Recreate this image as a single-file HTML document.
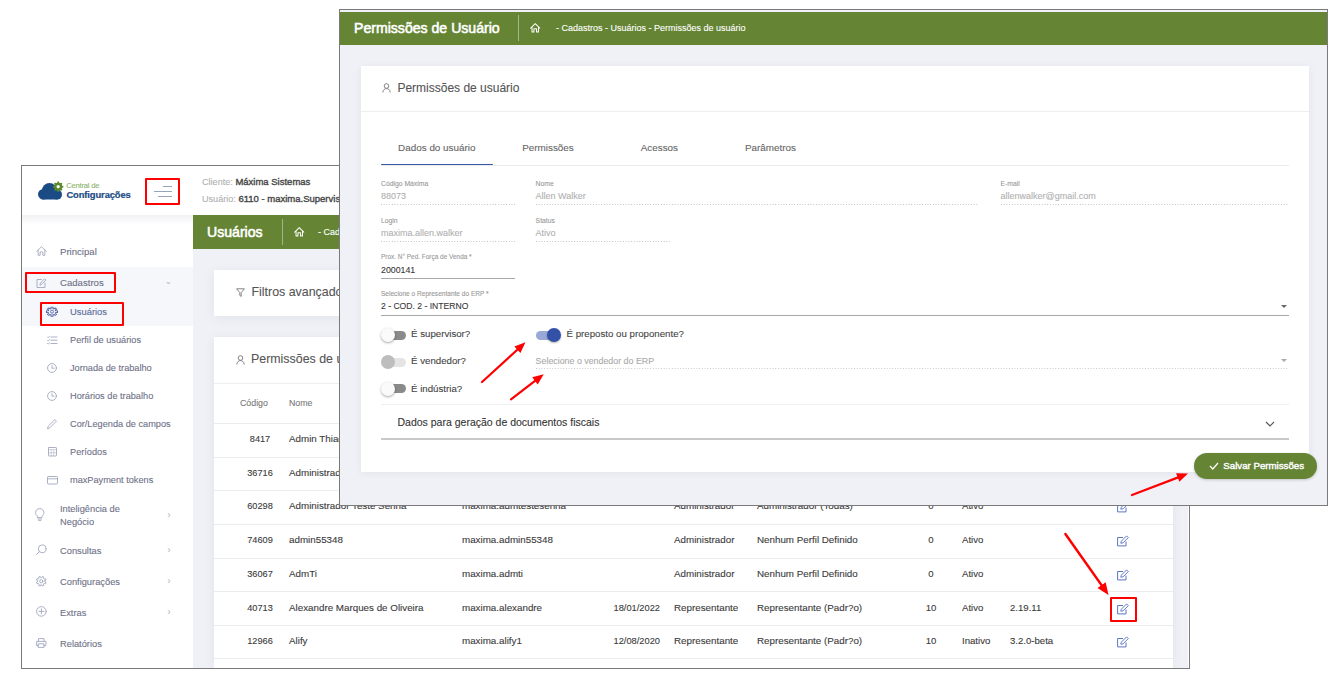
<!DOCTYPE html>
<html><head><meta charset="utf-8"><style>
html,body{margin:0;padding:0}
body{width:1336px;height:676px;position:relative;overflow:hidden;background:#fff;font-family:'Liberation Sans', sans-serif}
div{-webkit-text-stroke:0.1px currentColor}
</style></head><body>
<div style="position:absolute;left:21px;top:165px;width:1168px;height:503px;border:1px solid #7a7a7a;background:#fff;box-sizing:border-box;width:1169px;height:504px"></div>
<div style="position:absolute;left:193px;top:215px;width:995px;height:453px;background:#f0f1f6"></div>
<div style="position:absolute;left:22px;top:215px;width:171px;height:10px;background:linear-gradient(#f1f1f4,#fff)"></div>
<svg style="position:absolute;left:36px;top:180px" width="30" height="22" viewBox="0 0 30 22">
<g fill="#1b4b84"><circle cx="7.3" cy="14.3" r="5.3"/><circle cx="13.5" cy="10.6" r="7.6"/><circle cx="21" cy="14.6" r="5"/><rect x="6" y="12" width="16" height="7.6" rx="1"/></g>
<g transform="translate(22.2,6.7)"><circle r="3.9" fill="#5a8a2c"/><rect x="-0.95" y="-5.1" width="1.9" height="2" rx="0.3" transform="rotate(0)" fill="#5a8a2c"/><rect x="-0.95" y="-5.1" width="1.9" height="2" rx="0.3" transform="rotate(45)" fill="#5a8a2c"/><rect x="-0.95" y="-5.1" width="1.9" height="2" rx="0.3" transform="rotate(90)" fill="#5a8a2c"/><rect x="-0.95" y="-5.1" width="1.9" height="2" rx="0.3" transform="rotate(135)" fill="#5a8a2c"/><rect x="-0.95" y="-5.1" width="1.9" height="2" rx="0.3" transform="rotate(180)" fill="#5a8a2c"/><rect x="-0.95" y="-5.1" width="1.9" height="2" rx="0.3" transform="rotate(225)" fill="#5a8a2c"/><rect x="-0.95" y="-5.1" width="1.9" height="2" rx="0.3" transform="rotate(270)" fill="#5a8a2c"/><rect x="-0.95" y="-5.1" width="1.9" height="2" rx="0.3" transform="rotate(315)" fill="#5a8a2c"/><circle r="1.6" fill="#fff"/></g>
</svg>
<div style="position:absolute;left:66.2px;top:176.40px;line-height:20px;font-size:7.6px;color:#8db36a;font-weight:normal;white-space:nowrap;letter-spacing:-0.2px">Central de</div>
<div style="position:absolute;left:66.4px;top:185.20px;line-height:20px;font-size:9.4px;color:#1b4b84;font-weight:bold;white-space:nowrap;-webkit-text-stroke:0;letter-spacing:-0.1px;-webkit-text-stroke:0.2px #1b4b84">Configurações</div>
<div style="position:absolute;left:163px;top:185.8px;width:9px;height:1.1px;background:#95a5bb"></div>
<div style="position:absolute;left:153.8px;top:190.8px;width:18.2px;height:1.1px;background:#95a5bb"></div>
<div style="position:absolute;left:158px;top:195.9px;width:14px;height:1.1px;background:#95a5bb"></div>
<div style="position:absolute;left:202px;top:172.00px;line-height:20px;font-size:9.1px;color:#4a4a4a;font-weight:normal;white-space:nowrap;"><span style="color:#b0b0b0">Cliente:</span> <span style="font-size:9.5px;-webkit-text-stroke:0.4px #4a4a4a">Máxima Sistemas</span></div>
<div style="position:absolute;left:202px;top:189.00px;line-height:20px;font-size:9.1px;color:#4a4a4a;font-weight:normal;white-space:nowrap;"><span style="color:#b0b0b0">Usuário:</span> <span style="font-size:9.5px;-webkit-text-stroke:0.4px #4a4a4a">6110 - maxima.Supervisor</span></div>
<div style="position:absolute;left:193px;top:215px;width:995px;height:34px;background:#658535"></div>
<div style="position:absolute;left:207px;top:222.00px;line-height:20px;font-size:14.1px;color:#fff;font-weight:normal;white-space:nowrap;-webkit-text-stroke:0.55px #fff">Usuários</div>
<div style="position:absolute;left:282px;top:219px;width:1px;height:26px;background:#9fb585"></div>
<svg width="10.5" height="9.6" viewBox="0 0 12 11" style="position:absolute;left:293.5px;top:227.3px;overflow:visible"><path d="M0.8 5.9 L6 0.8 L11.2 5.9 M2.3 4.6 V10.2 H4.5 V6.6 H7.5 V10.2 H9.7 V4.6" fill="none" stroke="#fff" stroke-width="1.15" stroke-linejoin="round" stroke-linecap="round"/></svg>
<div style="position:absolute;left:318px;top:222.00px;line-height:20px;font-size:9px;color:#fff;font-weight:normal;white-space:nowrap;">- Cadastros</div>
<div style="position:absolute;left:22px;top:267px;width:171px;height:59px;background:#f6f7fb"></div>
<svg width="11" height="10" viewBox="0 0 12 11" style="position:absolute;left:35.8px;top:245.8px;overflow:visible"><path d="M0.8 5.9 L6 0.8 L11.2 5.9 M2.3 4.6 V10.2 H4.5 V6.6 H7.5 V10.2 H9.7 V4.6" fill="none" stroke="#a2a7be" stroke-width="1.0" stroke-linejoin="round" stroke-linecap="round"/></svg>
<svg width="11" height="10" viewBox="0 0 11 10" style="position:absolute;left:36px;top:277.5px;overflow:visible"><path d="M5.5 1.5 H1 V9.5 H9 V5" fill="none" stroke="#a2a7be" stroke-width="0.9" stroke-linecap="round" stroke-linejoin="round"/><path d="M4 6.8 L4.4 5 L8.6 0.8 L9.9 2.1 L5.7 6.3 Z" fill="none" stroke="#a2a7be" stroke-width="0.9" stroke-linecap="round" stroke-linejoin="round"/></svg>
<svg width="12" height="9.4" viewBox="0 0 12 9.4" style="position:absolute;left:46px;top:306.8px;overflow:visible"><g transform="translate(6,4.7) scale(1.22,1) translate(-6,-4.7)"><path d="M8.86 5.89 L8.66 6.30 L9.82 7.26 L8.56 8.52 L7.60 7.36 L7.19 7.56 L6.75 7.71 L6.90 9.21 L5.10 9.21 L5.25 7.71 L4.81 7.56 L4.40 7.36 L3.44 8.52 L2.18 7.26 L3.34 6.30 L3.14 5.89 L2.99 5.45 L1.49 5.60 L1.49 3.80 L2.99 3.95 L3.14 3.51 L3.34 3.10 L2.18 2.14 L3.44 0.88 L4.40 2.04 L4.81 1.84 L5.25 1.69 L5.10 0.19 L6.90 0.19 L6.75 1.69 L7.19 1.84 L7.60 2.04 L8.56 0.88 L9.82 2.14 L8.66 3.10 L8.86 3.51 L9.01 3.95 L10.51 3.80 L10.51 5.60 L9.01 5.45 Z" fill="none" stroke="#5767a6" stroke-width="0.85" stroke-linejoin="round"/></g><circle cx="6" cy="4.7" r="1.5" fill="none" stroke="#5767a6" stroke-width="0.9"/></svg>
<svg width="10" height="8.5" viewBox="0 0 10 8.5" style="position:absolute;left:47px;top:335.5px;overflow:visible"><path d="M4 1 H10 M4 4.2 H10 M4 7.5 H10 M0.5 1 L1.2 1.7 L2.4 0.4 M0.5 4.2 L1.2 4.9 L2.4 3.6 M0.5 7.5 L1.2 8.2 L2.4 6.9" fill="none" stroke="#a2a7be" stroke-width="0.9" stroke-linecap="round" stroke-linejoin="round"/></svg>
<svg width="10" height="10" viewBox="0 0 10 10" style="position:absolute;left:47px;top:362.9px;overflow:visible"><circle cx="5" cy="5" r="4.4" fill="none" stroke="#a2a7be" stroke-width="0.9" stroke-linecap="round" stroke-linejoin="round"/><path d="M5 2.6 V5.2 H7" fill="none" stroke="#a2a7be" stroke-width="0.9" stroke-linecap="round" stroke-linejoin="round"/></svg>
<svg width="10" height="10" viewBox="0 0 10 10" style="position:absolute;left:47px;top:390.7px;overflow:visible"><circle cx="5" cy="5" r="4.4" fill="none" stroke="#a2a7be" stroke-width="0.9" stroke-linecap="round" stroke-linejoin="round"/><path d="M5 2.6 V5.2 H7" fill="none" stroke="#a2a7be" stroke-width="0.9" stroke-linecap="round" stroke-linejoin="round"/></svg>
<svg width="10" height="10" viewBox="0 0 10 10" style="position:absolute;left:47px;top:419px;overflow:visible"><path d="M0.6 9.4 L1.2 7.2 L7.8 0.6 L9.4 2.2 L2.8 8.8 Z" fill="none" stroke="#a2a7be" stroke-width="0.9" stroke-linecap="round" stroke-linejoin="round"/></svg>
<svg width="9" height="9.5" viewBox="0 0 9 9.5" style="position:absolute;left:47.5px;top:447px;overflow:visible"><rect x="0.5" y="0.5" width="8" height="8.5" rx="0.6" fill="none" stroke="#a2a7be" stroke-width="0.9" stroke-linecap="round" stroke-linejoin="round"/><path d="M0.5 2.6 H8.5 M3.2 2.6 V9 M5.8 2.6 V9 M0.5 5.8 H8.5" fill="none" stroke="#a2a7be" stroke-width="0.5"/></svg>
<svg width="11" height="8.5" viewBox="0 0 11 8.5" style="position:absolute;left:46.5px;top:476px;overflow:visible"><rect x="0.5" y="0.5" width="10" height="7.5" rx="0.8" fill="none" stroke="#a2a7be" stroke-width="0.9" stroke-linecap="round" stroke-linejoin="round"/><path d="M0.5 2.8 H10.5" fill="none" stroke="#a2a7be" stroke-width="0.9" stroke-linecap="round" stroke-linejoin="round"/></svg>
<svg width="9.5" height="13" viewBox="0 0 9.5 13" style="position:absolute;left:35px;top:507.5px;overflow:visible"><path d="M2.6 8.4 C1 7.2 0.6 5.8 0.6 4.6 C0.6 2.2 2.5 0.6 4.75 0.6 C7 0.6 8.9 2.2 8.9 4.6 C8.9 5.8 8.5 7.2 6.9 8.4 V9.6 H2.6 Z" fill="none" stroke="#a2a7be" stroke-width="0.9" stroke-linecap="round" stroke-linejoin="round"/><path d="M3 11 H6.5 M3.6 12.4 H5.9" fill="none" stroke="#a2a7be" stroke-width="0.9" stroke-linecap="round" stroke-linejoin="round"/></svg>
<svg width="11" height="11" viewBox="0 0 11 11" style="position:absolute;left:36px;top:544px;overflow:visible"><circle cx="6.2" cy="4.8" r="3.9" fill="none" stroke="#a2a7be" stroke-width="0.9" stroke-linecap="round" stroke-linejoin="round"/><path d="M3.4 7.6 L0.6 10.4" fill="none" stroke="#a2a7be" stroke-width="0.9" stroke-linecap="round" stroke-linejoin="round"/></svg>
<svg width="10.5" height="10.5" viewBox="0 0 10.5 10.5" style="position:absolute;left:36px;top:576px;overflow:visible"><path d="M8.95 5.25 L8.90 5.87 L10.04 6.30 L9.38 7.89 L8.27 7.39 L7.87 7.87 L7.39 8.27 L7.89 9.38 L6.30 10.04 L5.87 8.90 L5.25 8.95 L4.63 8.90 L4.20 10.04 L2.61 9.38 L3.11 8.27 L2.63 7.87 L2.23 7.39 L1.12 7.89 L0.46 6.30 L1.60 5.87 L1.55 5.25 L1.60 4.63 L0.46 4.20 L1.12 2.61 L2.23 3.11 L2.63 2.63 L3.11 2.23 L2.61 1.12 L4.20 0.46 L4.63 1.60 L5.25 1.55 L5.87 1.60 L6.30 0.46 L7.89 1.12 L7.39 2.23 L7.87 2.63 L8.27 3.11 L9.38 2.61 L10.04 4.20 L8.90 4.63 Z" fill="none" stroke="#a2a7be" stroke-width="0.9" stroke-linecap="round" stroke-linejoin="round"/><circle cx="5.25" cy="5.25" r="1.6" fill="none" stroke="#a2a7be" stroke-width="0.9" stroke-linecap="round" stroke-linejoin="round"/></svg>
<svg width="11" height="11" viewBox="0 0 11 11" style="position:absolute;left:36px;top:606px;overflow:visible"><circle cx="5.4" cy="5.4" r="4.8" fill="none" stroke="#a2a7be" stroke-width="0.9" stroke-linecap="round" stroke-linejoin="round"/><path d="M5.4 2.9 V7.9 M2.9 5.4 H7.9" fill="none" stroke="#a2a7be" stroke-width="0.9" stroke-linecap="round" stroke-linejoin="round"/></svg>
<svg width="10.5" height="10" viewBox="0 0 10.5 10" style="position:absolute;left:36px;top:638px;overflow:visible"><path d="M2.5 3.4 V0.6 H8 V3.4 M2.5 7.6 H0.6 V3.4 H9.9 V7.6 H8 M2.5 5.8 H8 V9.4 H2.5 Z" fill="none" stroke="#a2a7be" stroke-width="0.9" stroke-linecap="round" stroke-linejoin="round"/></svg>
<div style="position:absolute;left:60px;top:241.60px;line-height:20px;font-size:9.6px;color:#6e7187;font-weight:normal;white-space:nowrap;">Principal</div>
<div style="position:absolute;left:60px;top:273.10px;line-height:20px;font-size:9.6px;color:#6e7187;font-weight:normal;white-space:nowrap;">Cadastros</div>
<div style="position:absolute;left:168px;top:272.00px;line-height:20px;font-size:8px;color:#b0b3c0;font-weight:normal;white-space:nowrap;transform:translateX(-50%);">&#8964;</div>
<div style="position:absolute;left:70px;top:302.00px;line-height:20px;font-size:9.4px;color:#5a6a9a;font-weight:normal;white-space:nowrap;">Usuários</div>
<div style="position:absolute;left:70px;top:330.00px;line-height:20px;font-size:9.2px;color:#6e7187;font-weight:normal;white-space:nowrap;">Perfil de usuários</div>
<div style="position:absolute;left:70px;top:358.00px;line-height:20px;font-size:9.2px;color:#6e7187;font-weight:normal;white-space:nowrap;">Jornada de trabalho</div>
<div style="position:absolute;left:70px;top:386.00px;line-height:20px;font-size:9.2px;color:#6e7187;font-weight:normal;white-space:nowrap;">Horários de trabalho</div>
<div style="position:absolute;left:70px;top:414.00px;line-height:20px;font-size:9.2px;color:#6e7187;font-weight:normal;white-space:nowrap;">Cor/Legenda de campos</div>
<div style="position:absolute;left:70px;top:442.00px;line-height:20px;font-size:9.2px;color:#6e7187;font-weight:normal;white-space:nowrap;">Períodos</div>
<div style="position:absolute;left:70px;top:470.00px;line-height:20px;font-size:9.2px;color:#6e7187;font-weight:normal;white-space:nowrap;">maxPayment tokens</div>
<div style="position:absolute;left:60px;top:498.50px;line-height:20px;font-size:9.3px;color:#6e7187;font-weight:normal;white-space:nowrap;">Inteligência de</div>
<div style="position:absolute;left:60px;top:512.00px;line-height:20px;font-size:9.3px;color:#6e7187;font-weight:normal;white-space:nowrap;">Negócio</div>
<div style="position:absolute;left:60px;top:540.50px;line-height:20px;font-size:9.3px;color:#6e7187;font-weight:normal;white-space:nowrap;">Consultas</div>
<div style="position:absolute;left:60px;top:571.50px;line-height:20px;font-size:9.3px;color:#6e7187;font-weight:normal;white-space:nowrap;">Configurações</div>
<div style="position:absolute;left:60px;top:602.50px;line-height:20px;font-size:9.3px;color:#6e7187;font-weight:normal;white-space:nowrap;">Extras</div>
<div style="position:absolute;left:60px;top:633.50px;line-height:20px;font-size:9.3px;color:#6e7187;font-weight:normal;white-space:nowrap;">Relatórios</div>
<div style="position:absolute;left:169px;top:505.00px;line-height:20px;font-size:9px;color:#b0b3c0;font-weight:normal;white-space:nowrap;transform:translateX(-50%);">&#8250;</div>
<div style="position:absolute;left:169px;top:540.00px;line-height:20px;font-size:9px;color:#b0b3c0;font-weight:normal;white-space:nowrap;transform:translateX(-50%);">&#8250;</div>
<div style="position:absolute;left:169px;top:571.00px;line-height:20px;font-size:9px;color:#b0b3c0;font-weight:normal;white-space:nowrap;transform:translateX(-50%);">&#8250;</div>
<div style="position:absolute;left:169px;top:602.00px;line-height:20px;font-size:9px;color:#b0b3c0;font-weight:normal;white-space:nowrap;transform:translateX(-50%);">&#8250;</div>
<div style="position:absolute;left:214px;top:270px;width:959px;height:46px;background:#fff;box-shadow:0 2px 12px rgba(0,0,0,0.06)"></div>
<div style="position:absolute;left:251.5px;top:282.00px;line-height:20px;font-size:12.4px;color:#555;font-weight:normal;white-space:nowrap;">Filtros avançados</div>
<svg width="9" height="9" viewBox="0 0 9 9" style="position:absolute;left:236px;top:287.5px;overflow:visible"><path d="M0.6 0.8 H8.4 L5.2 4.6 V8.4 L3.8 7.4 V4.6 Z" fill="none" stroke="#777" stroke-width="0.9" stroke-linejoin="round"/></svg>
<div style="position:absolute;left:214px;top:337px;width:959px;height:331px;background:#fff;box-shadow:0 2px 12px rgba(0,0,0,0.06)"></div>
<div style="position:absolute;left:251px;top:349.30px;line-height:20px;font-size:12.4px;color:#555;font-weight:normal;white-space:nowrap;">Permissões de usuário</div>
<svg width="9" height="10" viewBox="0 0 9 10" style="position:absolute;left:236px;top:354.5px;overflow:visible"><circle cx="4.5" cy="3" r="2.3" fill="none" stroke="#777" stroke-width="0.9"/><path d="M0.8 9.5 C1 6.5 3 5.6 4.5 5.6 C6 5.6 8 6.5 8.2 9.5" fill="none" stroke="#777" stroke-width="0.9"/></svg>
<div style="position:absolute;left:214px;top:383px;width:959px;height:1px;background:#eee"></div>
<div style="position:absolute;left:240px;top:392.70px;line-height:20px;font-size:8.8px;color:#7a7a7a;font-weight:normal;white-space:nowrap;">Código</div>
<div style="position:absolute;left:289px;top:392.70px;line-height:20px;font-size:8.8px;color:#7a7a7a;font-weight:normal;white-space:nowrap;">Nome</div>
<div style="position:absolute;left:214px;top:423px;width:959px;height:1px;background:#ececec"></div>
<div style="position:absolute;left:260px;top:429.00px;line-height:20px;font-size:9.2px;color:#3a3a3a;font-weight:normal;white-space:nowrap;transform:translateX(-50%);">8417</div>
<div style="position:absolute;left:289px;top:429.00px;line-height:20px;font-size:9.8px;color:#3a3a3a;font-weight:normal;white-space:nowrap;">Admin Thiago</div>
<div style="position:absolute;left:462px;top:429.00px;line-height:20px;font-size:9.8px;color:#3a3a3a;font-weight:normal;white-space:nowrap;"></div>
<div style="position:absolute;left:660px;top:429.00px;line-height:20px;font-size:9.3px;color:#3a3a3a;font-weight:normal;white-space:nowrap;transform:translateX(-100%);"></div>
<div style="position:absolute;left:674px;top:429.00px;line-height:20px;font-size:9.8px;color:#3a3a3a;font-weight:normal;white-space:nowrap;"></div>
<div style="position:absolute;left:757px;top:429.00px;line-height:20px;font-size:9.8px;color:#3a3a3a;font-weight:normal;white-space:nowrap;"></div>
<div style="position:absolute;left:931px;top:429.00px;line-height:20px;font-size:9.6px;color:#3a3a3a;font-weight:normal;white-space:nowrap;transform:translateX(-50%);"></div>
<div style="position:absolute;left:962px;top:429.00px;line-height:20px;font-size:9.6px;color:#3a3a3a;font-weight:normal;white-space:nowrap;"></div>
<div style="position:absolute;left:1010px;top:429.00px;line-height:20px;font-size:9.6px;color:#3a3a3a;font-weight:normal;white-space:nowrap;"></div>
<svg width="15" height="14" viewBox="0 0 15 14" style="position:absolute;left:1116px;top:435.0px;overflow:visible"><path d="M7 1.5 H1.6 V9.9 H10 V5.6" fill="none" stroke="#5b76c4" stroke-width="1.0" stroke-linejoin="round"/><path d="M4.8 7.2 L5.3 5.2 L10.6 -0.1 L12.3 1.6 L7 6.9 Z" fill="none" stroke="#5b76c4" stroke-width="0.95" stroke-linejoin="round"/></svg>
<div style="position:absolute;left:214px;top:456.87px;width:959px;height:1px;background:#ececec"></div>
<div style="position:absolute;left:260px;top:462.70px;line-height:20px;font-size:9.2px;color:#3a3a3a;font-weight:normal;white-space:nowrap;transform:translateX(-50%);">36716</div>
<div style="position:absolute;left:289px;top:462.70px;line-height:20px;font-size:9.8px;color:#3a3a3a;font-weight:normal;white-space:nowrap;">Administrador</div>
<div style="position:absolute;left:462px;top:462.70px;line-height:20px;font-size:9.8px;color:#3a3a3a;font-weight:normal;white-space:nowrap;"></div>
<div style="position:absolute;left:660px;top:462.70px;line-height:20px;font-size:9.3px;color:#3a3a3a;font-weight:normal;white-space:nowrap;transform:translateX(-100%);"></div>
<div style="position:absolute;left:674px;top:462.70px;line-height:20px;font-size:9.8px;color:#3a3a3a;font-weight:normal;white-space:nowrap;"></div>
<div style="position:absolute;left:757px;top:462.70px;line-height:20px;font-size:9.8px;color:#3a3a3a;font-weight:normal;white-space:nowrap;"></div>
<div style="position:absolute;left:931px;top:462.70px;line-height:20px;font-size:9.6px;color:#3a3a3a;font-weight:normal;white-space:nowrap;transform:translateX(-50%);"></div>
<div style="position:absolute;left:962px;top:462.70px;line-height:20px;font-size:9.6px;color:#3a3a3a;font-weight:normal;white-space:nowrap;"></div>
<div style="position:absolute;left:1010px;top:462.70px;line-height:20px;font-size:9.6px;color:#3a3a3a;font-weight:normal;white-space:nowrap;"></div>
<svg width="15" height="14" viewBox="0 0 15 14" style="position:absolute;left:1116px;top:468.7px;overflow:visible"><path d="M7 1.5 H1.6 V9.9 H10 V5.6" fill="none" stroke="#5b76c4" stroke-width="1.0" stroke-linejoin="round"/><path d="M4.8 7.2 L5.3 5.2 L10.6 -0.1 L12.3 1.6 L7 6.9 Z" fill="none" stroke="#5b76c4" stroke-width="0.95" stroke-linejoin="round"/></svg>
<div style="position:absolute;left:214px;top:490.44px;width:959px;height:1px;background:#ececec"></div>
<div style="position:absolute;left:260px;top:496.40px;line-height:20px;font-size:9.2px;color:#3a3a3a;font-weight:normal;white-space:nowrap;transform:translateX(-50%);">60298</div>
<div style="position:absolute;left:289px;top:496.40px;line-height:20px;font-size:9.8px;color:#3a3a3a;font-weight:normal;white-space:nowrap;">Administrador Teste Senna</div>
<div style="position:absolute;left:462px;top:496.40px;line-height:20px;font-size:9.8px;color:#3a3a3a;font-weight:normal;white-space:nowrap;">maxima.admtestesenna</div>
<div style="position:absolute;left:660px;top:496.40px;line-height:20px;font-size:9.3px;color:#3a3a3a;font-weight:normal;white-space:nowrap;transform:translateX(-100%);"></div>
<div style="position:absolute;left:674px;top:496.40px;line-height:20px;font-size:9.8px;color:#3a3a3a;font-weight:normal;white-space:nowrap;">Administrador</div>
<div style="position:absolute;left:757px;top:496.40px;line-height:20px;font-size:9.8px;color:#3a3a3a;font-weight:normal;white-space:nowrap;">Administrador (Todas)</div>
<div style="position:absolute;left:931px;top:496.40px;line-height:20px;font-size:9.6px;color:#3a3a3a;font-weight:normal;white-space:nowrap;transform:translateX(-50%);">0</div>
<div style="position:absolute;left:962px;top:496.40px;line-height:20px;font-size:9.6px;color:#3a3a3a;font-weight:normal;white-space:nowrap;">Ativo</div>
<div style="position:absolute;left:1010px;top:496.40px;line-height:20px;font-size:9.6px;color:#3a3a3a;font-weight:normal;white-space:nowrap;"></div>
<svg width="15" height="14" viewBox="0 0 15 14" style="position:absolute;left:1116px;top:502.4px;overflow:visible"><path d="M7 1.5 H1.6 V9.9 H10 V5.6" fill="none" stroke="#5b76c4" stroke-width="1.0" stroke-linejoin="round"/><path d="M4.8 7.2 L5.3 5.2 L10.6 -0.1 L12.3 1.6 L7 6.9 Z" fill="none" stroke="#5b76c4" stroke-width="0.95" stroke-linejoin="round"/></svg>
<div style="position:absolute;left:214px;top:524.01px;width:959px;height:1px;background:#ececec"></div>
<div style="position:absolute;left:260px;top:530.10px;line-height:20px;font-size:9.2px;color:#3a3a3a;font-weight:normal;white-space:nowrap;transform:translateX(-50%);">74609</div>
<div style="position:absolute;left:289px;top:530.10px;line-height:20px;font-size:9.8px;color:#3a3a3a;font-weight:normal;white-space:nowrap;">admin55348</div>
<div style="position:absolute;left:462px;top:530.10px;line-height:20px;font-size:9.8px;color:#3a3a3a;font-weight:normal;white-space:nowrap;">maxima.admin55348</div>
<div style="position:absolute;left:660px;top:530.10px;line-height:20px;font-size:9.3px;color:#3a3a3a;font-weight:normal;white-space:nowrap;transform:translateX(-100%);"></div>
<div style="position:absolute;left:674px;top:530.10px;line-height:20px;font-size:9.8px;color:#3a3a3a;font-weight:normal;white-space:nowrap;">Administrador</div>
<div style="position:absolute;left:757px;top:530.10px;line-height:20px;font-size:9.8px;color:#3a3a3a;font-weight:normal;white-space:nowrap;">Nenhum Perfil Definido</div>
<div style="position:absolute;left:931px;top:530.10px;line-height:20px;font-size:9.6px;color:#3a3a3a;font-weight:normal;white-space:nowrap;transform:translateX(-50%);">0</div>
<div style="position:absolute;left:962px;top:530.10px;line-height:20px;font-size:9.6px;color:#3a3a3a;font-weight:normal;white-space:nowrap;">Ativo</div>
<div style="position:absolute;left:1010px;top:530.10px;line-height:20px;font-size:9.6px;color:#3a3a3a;font-weight:normal;white-space:nowrap;"></div>
<svg width="15" height="14" viewBox="0 0 15 14" style="position:absolute;left:1116px;top:536.1px;overflow:visible"><path d="M7 1.5 H1.6 V9.9 H10 V5.6" fill="none" stroke="#5b76c4" stroke-width="1.0" stroke-linejoin="round"/><path d="M4.8 7.2 L5.3 5.2 L10.6 -0.1 L12.3 1.6 L7 6.9 Z" fill="none" stroke="#5b76c4" stroke-width="0.95" stroke-linejoin="round"/></svg>
<div style="position:absolute;left:214px;top:557.58px;width:959px;height:1px;background:#ececec"></div>
<div style="position:absolute;left:260px;top:563.80px;line-height:20px;font-size:9.2px;color:#3a3a3a;font-weight:normal;white-space:nowrap;transform:translateX(-50%);">36067</div>
<div style="position:absolute;left:289px;top:563.80px;line-height:20px;font-size:9.8px;color:#3a3a3a;font-weight:normal;white-space:nowrap;">AdmTi</div>
<div style="position:absolute;left:462px;top:563.80px;line-height:20px;font-size:9.8px;color:#3a3a3a;font-weight:normal;white-space:nowrap;">maxima.admti</div>
<div style="position:absolute;left:660px;top:563.80px;line-height:20px;font-size:9.3px;color:#3a3a3a;font-weight:normal;white-space:nowrap;transform:translateX(-100%);"></div>
<div style="position:absolute;left:674px;top:563.80px;line-height:20px;font-size:9.8px;color:#3a3a3a;font-weight:normal;white-space:nowrap;">Administrador</div>
<div style="position:absolute;left:757px;top:563.80px;line-height:20px;font-size:9.8px;color:#3a3a3a;font-weight:normal;white-space:nowrap;">Nenhum Perfil Definido</div>
<div style="position:absolute;left:931px;top:563.80px;line-height:20px;font-size:9.6px;color:#3a3a3a;font-weight:normal;white-space:nowrap;transform:translateX(-50%);">0</div>
<div style="position:absolute;left:962px;top:563.80px;line-height:20px;font-size:9.6px;color:#3a3a3a;font-weight:normal;white-space:nowrap;">Ativo</div>
<div style="position:absolute;left:1010px;top:563.80px;line-height:20px;font-size:9.6px;color:#3a3a3a;font-weight:normal;white-space:nowrap;"></div>
<svg width="15" height="14" viewBox="0 0 15 14" style="position:absolute;left:1116px;top:569.8px;overflow:visible"><path d="M7 1.5 H1.6 V9.9 H10 V5.6" fill="none" stroke="#5b76c4" stroke-width="1.0" stroke-linejoin="round"/><path d="M4.8 7.2 L5.3 5.2 L10.6 -0.1 L12.3 1.6 L7 6.9 Z" fill="none" stroke="#5b76c4" stroke-width="0.95" stroke-linejoin="round"/></svg>
<div style="position:absolute;left:214px;top:591.15px;width:959px;height:1px;background:#ececec"></div>
<div style="position:absolute;left:260px;top:597.50px;line-height:20px;font-size:9.2px;color:#3a3a3a;font-weight:normal;white-space:nowrap;transform:translateX(-50%);">40713</div>
<div style="position:absolute;left:289px;top:597.50px;line-height:20px;font-size:9.8px;color:#3a3a3a;font-weight:normal;white-space:nowrap;">Alexandre Marques de Oliveira</div>
<div style="position:absolute;left:462px;top:597.50px;line-height:20px;font-size:9.8px;color:#3a3a3a;font-weight:normal;white-space:nowrap;">maxima.alexandre</div>
<div style="position:absolute;left:660px;top:597.50px;line-height:20px;font-size:9.3px;color:#3a3a3a;font-weight:normal;white-space:nowrap;transform:translateX(-100%);">18/01/2022</div>
<div style="position:absolute;left:674px;top:597.50px;line-height:20px;font-size:9.8px;color:#3a3a3a;font-weight:normal;white-space:nowrap;">Representante</div>
<div style="position:absolute;left:757px;top:597.50px;line-height:20px;font-size:9.8px;color:#3a3a3a;font-weight:normal;white-space:nowrap;">Representante (Padr?o)</div>
<div style="position:absolute;left:931px;top:597.50px;line-height:20px;font-size:9.6px;color:#3a3a3a;font-weight:normal;white-space:nowrap;transform:translateX(-50%);">10</div>
<div style="position:absolute;left:962px;top:597.50px;line-height:20px;font-size:9.6px;color:#3a3a3a;font-weight:normal;white-space:nowrap;">Ativo</div>
<div style="position:absolute;left:1010px;top:597.50px;line-height:20px;font-size:9.6px;color:#3a3a3a;font-weight:normal;white-space:nowrap;">2.19.11</div>
<svg width="15" height="14" viewBox="0 0 15 14" style="position:absolute;left:1116px;top:603.5px;overflow:visible"><path d="M7 1.5 H1.6 V9.9 H10 V5.6" fill="none" stroke="#5b76c4" stroke-width="1.0" stroke-linejoin="round"/><path d="M4.8 7.2 L5.3 5.2 L10.6 -0.1 L12.3 1.6 L7 6.9 Z" fill="none" stroke="#5b76c4" stroke-width="0.95" stroke-linejoin="round"/></svg>
<div style="position:absolute;left:214px;top:624.72px;width:959px;height:1px;background:#ececec"></div>
<div style="position:absolute;left:260px;top:631.20px;line-height:20px;font-size:9.2px;color:#3a3a3a;font-weight:normal;white-space:nowrap;transform:translateX(-50%);">12966</div>
<div style="position:absolute;left:289px;top:631.20px;line-height:20px;font-size:9.8px;color:#3a3a3a;font-weight:normal;white-space:nowrap;">Alify</div>
<div style="position:absolute;left:462px;top:631.20px;line-height:20px;font-size:9.8px;color:#3a3a3a;font-weight:normal;white-space:nowrap;">maxima.alify1</div>
<div style="position:absolute;left:660px;top:631.20px;line-height:20px;font-size:9.3px;color:#3a3a3a;font-weight:normal;white-space:nowrap;transform:translateX(-100%);">12/08/2020</div>
<div style="position:absolute;left:674px;top:631.20px;line-height:20px;font-size:9.8px;color:#3a3a3a;font-weight:normal;white-space:nowrap;">Representante</div>
<div style="position:absolute;left:757px;top:631.20px;line-height:20px;font-size:9.8px;color:#3a3a3a;font-weight:normal;white-space:nowrap;">Representante (Padr?o)</div>
<div style="position:absolute;left:931px;top:631.20px;line-height:20px;font-size:9.6px;color:#3a3a3a;font-weight:normal;white-space:nowrap;transform:translateX(-50%);">10</div>
<div style="position:absolute;left:962px;top:631.20px;line-height:20px;font-size:9.6px;color:#3a3a3a;font-weight:normal;white-space:nowrap;">Inativo</div>
<div style="position:absolute;left:1010px;top:631.20px;line-height:20px;font-size:9.6px;color:#3a3a3a;font-weight:normal;white-space:nowrap;">3.2.0-beta</div>
<svg width="15" height="14" viewBox="0 0 15 14" style="position:absolute;left:1116px;top:637.2px;overflow:visible"><path d="M7 1.5 H1.6 V9.9 H10 V5.6" fill="none" stroke="#5b76c4" stroke-width="1.0" stroke-linejoin="round"/><path d="M4.8 7.2 L5.3 5.2 L10.6 -0.1 L12.3 1.6 L7 6.9 Z" fill="none" stroke="#5b76c4" stroke-width="0.95" stroke-linejoin="round"/></svg>
<div style="position:absolute;left:214px;top:658.29px;width:959px;height:1px;background:#ececec"></div>
<div style="position:absolute;left:0px;top:669px;width:1336px;height:7px;background:#fff"></div>
<div style="position:absolute;left:1190px;top:506px;width:146px;height:170px;background:#fff"></div>
<div style="position:absolute;left:21px;top:668px;width:1169px;height:1px;background:#7a7a7a"></div>
<div style="position:absolute;left:1189px;top:165px;width:1px;height:504px;background:#7a7a7a"></div>
<div style="position:absolute;left:339px;top:9px;width:989px;height:497px;border:1px solid #7a7a7a;background:#f0f1f6;box-sizing:border-box"></div>
<div style="position:absolute;left:340px;top:12px;width:987px;height:33px;background:#658535"></div>
<div style="position:absolute;left:354px;top:18.00px;line-height:20px;font-size:14.1px;color:#fff;font-weight:normal;white-space:nowrap;-webkit-text-stroke:0.55px #fff">Permissões de Usuário</div>
<div style="position:absolute;left:518px;top:15px;width:1px;height:26px;background:#a3b98a"></div>
<svg width="10.5" height="9.6" viewBox="0 0 12 11" style="position:absolute;left:529.6px;top:23.2px;overflow:visible"><path d="M0.8 5.9 L6 0.8 L11.2 5.9 M2.3 4.6 V10.2 H4.5 V6.6 H7.5 V10.2 H9.7 V4.6" fill="none" stroke="#fff" stroke-width="1.15" stroke-linejoin="round" stroke-linecap="round"/></svg>
<div style="position:absolute;left:556px;top:17.80px;line-height:20px;font-size:9px;color:#fff;font-weight:normal;white-space:nowrap;">- Cadastros - Usuários - Permissões de usuário</div>
<div style="position:absolute;left:361px;top:66px;width:948px;height:406px;background:#fff;box-shadow:0 1px 8px rgba(0,0,0,0.06)"></div>
<div style="position:absolute;left:361px;top:111px;width:948px;height:1px;background:#eeeeee"></div>
<svg width="9" height="10" viewBox="0 0 9 10" style="position:absolute;left:382px;top:83px"><circle cx="4.5" cy="3" r="2.3" fill="none" stroke="#777" stroke-width="0.9"/><path d="M0.8 9.5 C1 6.5 3 5.6 4.5 5.6 C6 5.6 8 6.5 8.2 9.5" fill="none" stroke="#777" stroke-width="0.9"/></svg>
<div style="position:absolute;left:397.4px;top:78.00px;line-height:20px;font-size:12px;color:#555;font-weight:normal;white-space:nowrap;">Permissões de usuário</div>
<div style="position:absolute;left:436.8px;top:138.00px;line-height:20px;font-size:9.9px;color:#666;font-weight:normal;white-space:nowrap;transform:translateX(-50%);">Dados do usuário</div>
<div style="position:absolute;left:548px;top:138.00px;line-height:20px;font-size:9.9px;color:#666;font-weight:normal;white-space:nowrap;transform:translateX(-50%);">Permissões</div>
<div style="position:absolute;left:659.4px;top:138.00px;line-height:20px;font-size:9.9px;color:#666;font-weight:normal;white-space:nowrap;transform:translateX(-50%);">Acessos</div>
<div style="position:absolute;left:770.5px;top:138.00px;line-height:20px;font-size:9.9px;color:#666;font-weight:normal;white-space:nowrap;transform:translateX(-50%);">Parâmetros</div>
<div style="position:absolute;left:381px;top:164.6px;width:908px;height:1px;background:#ebebee"></div>
<div style="position:absolute;left:381px;top:163.6px;width:111.5px;height:1.7px;background:#3b58a8;border-radius:1px"></div>
<div style="position:absolute;left:381px;top:173.80px;line-height:20px;font-size:6.8px;color:#999;font-weight:normal;white-space:nowrap;">Código Máxima</div>
<div style="position:absolute;left:381px;top:186.00px;line-height:20px;font-size:9px;color:#b0b0b0;font-weight:normal;white-space:nowrap;">88073</div>
<div style="position:absolute;left:381px;top:204px;width:134px;height:1px;background-image:linear-gradient(to right,#bebebe 50%,transparent 50%);background-size:2.73px 1px"></div>
<div style="position:absolute;left:535.6px;top:173.80px;line-height:20px;font-size:6.8px;color:#999;font-weight:normal;white-space:nowrap;">Nome</div>
<div style="position:absolute;left:535.6px;top:186.00px;line-height:20px;font-size:9px;color:#b0b0b0;font-weight:normal;white-space:nowrap;">Allen Walker</div>
<div style="position:absolute;left:535.6px;top:204px;width:443px;height:1px;background-image:linear-gradient(to right,#bebebe 50%,transparent 50%);background-size:2.73px 1px"></div>
<div style="position:absolute;left:1000.5px;top:173.80px;line-height:20px;font-size:6.8px;color:#999;font-weight:normal;white-space:nowrap;">E-mail</div>
<div style="position:absolute;left:1000.5px;top:186.00px;line-height:20px;font-size:9px;color:#b0b0b0;font-weight:normal;white-space:nowrap;">allenwalker@gmail.com</div>
<div style="position:absolute;left:1000.5px;top:204px;width:288px;height:1px;background-image:linear-gradient(to right,#bebebe 50%,transparent 50%);background-size:2.73px 1px"></div>
<div style="position:absolute;left:381px;top:210.60px;line-height:20px;font-size:6.8px;color:#999;font-weight:normal;white-space:nowrap;">Login</div>
<div style="position:absolute;left:381px;top:222.70px;line-height:20px;font-size:9px;color:#b0b0b0;font-weight:normal;white-space:nowrap;">maxima.allen.walker</div>
<div style="position:absolute;left:381px;top:241px;width:134px;height:1px;background-image:linear-gradient(to right,#bebebe 50%,transparent 50%);background-size:2.73px 1px"></div>
<div style="position:absolute;left:535.6px;top:210.60px;line-height:20px;font-size:6.8px;color:#999;font-weight:normal;white-space:nowrap;">Status</div>
<div style="position:absolute;left:535.6px;top:222.70px;line-height:20px;font-size:9px;color:#b0b0b0;font-weight:normal;white-space:nowrap;">Ativo</div>
<div style="position:absolute;left:535.6px;top:241px;width:134.4px;height:1px;background-image:linear-gradient(to right,#bebebe 50%,transparent 50%);background-size:2.73px 1px"></div>
<div style="position:absolute;left:381px;top:246.80px;line-height:20px;font-size:6.45px;color:#999;font-weight:normal;white-space:nowrap;">Prox. N° Ped. Força de Venda *</div>
<div style="position:absolute;left:381px;top:259.60px;line-height:20px;font-size:8.8px;color:#383838;font-weight:normal;white-space:nowrap;">2000141</div>
<div style="position:absolute;left:381px;top:278px;width:134px;height:1px;background:#a8a8a8"></div>
<div style="position:absolute;left:381px;top:283.70px;line-height:20px;font-size:6.55px;color:#999;font-weight:normal;white-space:nowrap;">Selecione o Representante do ERP *</div>
<div style="position:absolute;left:381px;top:296.40px;line-height:20px;font-size:8.6px;color:#383838;font-weight:normal;white-space:nowrap;">2 - COD. 2 - INTERNO</div>
<div style="position:absolute;left:381px;top:315px;width:908px;height:1px;background:#a8a8a8"></div>
<div style="position:absolute;left:1281px;top:305px;width:0;height:0;border-left:3px solid transparent;border-right:3px solid transparent;border-top:3px solid #666"></div>
<div style="position:absolute;left:382px;top:330.7px;width:24px;height:9px;background:#8a8a8a;border-radius:5px"></div>
<div style="position:absolute;left:381px;top:328.2px;width:14px;height:14px;background:#fafafa;border-radius:50%;box-shadow:0 1px 2.5px rgba(0,0,0,0.35)"></div>
<div style="position:absolute;left:411px;top:324.40px;line-height:20px;font-size:9.7px;color:#444;font-weight:normal;white-space:nowrap;">É supervisor?</div>
<div style="position:absolute;left:382px;top:357.8px;width:24px;height:9px;background:#e4e4e4;border-radius:5px"></div>
<div style="position:absolute;left:381px;top:355.3px;width:14px;height:14px;background:#bdbdbd;border-radius:50%"></div>
<div style="position:absolute;left:411px;top:351.40px;line-height:20px;font-size:9.7px;color:#444;font-weight:normal;white-space:nowrap;">É vendedor?</div>
<div style="position:absolute;left:382px;top:384.1px;width:24px;height:9px;background:#8a8a8a;border-radius:5px"></div>
<div style="position:absolute;left:381px;top:381.6px;width:14px;height:14px;background:#fafafa;border-radius:50%;box-shadow:0 1px 2.5px rgba(0,0,0,0.35)"></div>
<div style="position:absolute;left:411px;top:378.60px;line-height:20px;font-size:9.7px;color:#444;font-weight:normal;white-space:nowrap;">É indústria?</div>
<div style="position:absolute;left:536px;top:330.5px;width:24px;height:9.3px;background:#98a9d8;border-radius:5px"></div>
<div style="position:absolute;left:547px;top:328.1px;width:14px;height:14px;background:#3451a8;border-radius:50%;box-shadow:0 1px 2px rgba(0,0,0,0.3)"></div>
<div style="position:absolute;left:566.5px;top:324.40px;line-height:20px;font-size:9.7px;color:#444;font-weight:normal;white-space:nowrap;">É preposto ou proponente?</div>
<div style="position:absolute;left:535.6px;top:350.60px;line-height:20px;font-size:8.86px;color:#aaa;font-weight:normal;white-space:nowrap;">Selecione o vendedor do ERP</div>
<div style="position:absolute;left:535.6px;top:368px;width:753px;height:1px;background-image:linear-gradient(to right,#c8c8c8 50%,transparent 50%);background-size:2.73px 1px"></div>
<div style="position:absolute;left:1281px;top:358.5px;width:0;height:0;border-left:3px solid transparent;border-right:3px solid transparent;border-top:3px solid #aaa"></div>
<div style="position:absolute;left:381px;top:404px;width:908px;height:1px;background:#f0f0f0"></div>
<div style="position:absolute;left:397.5px;top:411.70px;line-height:20px;font-size:10.5px;color:#333;font-weight:normal;white-space:nowrap;">Dados para geração de documentos fiscais</div>
<svg width="10" height="6" viewBox="0 0 10 6" style="position:absolute;left:1265px;top:421px"><path d="M1 1 L5 5 L9 1" fill="none" stroke="#555" stroke-width="1.1"/></svg>
<div style="position:absolute;left:381px;top:437.8px;width:908px;height:2px;background:#c9c9c9"></div>
<div style="position:absolute;left:1193.5px;top:453px;width:123.5px;height:25.5px;background:#658535;border-radius:13px;box-shadow:0 1px 3px rgba(0,0,0,0.2)"></div>
<svg width="10" height="8" viewBox="0 0 10 8" style="position:absolute;left:1208.5px;top:461.5px"><path d="M1 4 L3.8 7 L9 1" fill="none" stroke="#fff" stroke-width="1.2"/></svg>
<div style="position:absolute;left:1223.3px;top:455.50px;line-height:20px;font-size:9.7px;color:#fff;font-weight:normal;white-space:nowrap;-webkit-text-stroke:0.4px #fff">Salvar Permissões</div>
<div style="position:absolute;left:145px;top:178px;width:35.19999999999999px;height:26.5px;border:2.8px solid #f00;box-sizing:border-box;border-radius:1px"></div>
<div style="position:absolute;left:24.5px;top:271.5px;width:91.5px;height:21.5px;border:2.8px solid #f00;box-sizing:border-box;border-radius:1px"></div>
<div style="position:absolute;left:39.5px;top:301.5px;width:84.5px;height:24.19999999999999px;border:2.8px solid #f00;box-sizing:border-box;border-radius:1px"></div>
<div style="position:absolute;left:1110px;top:596.5px;width:26.5px;height:25.0px;border:2.8px solid #f00;box-sizing:border-box;border-radius:1px"></div>
<svg style="position:absolute;left:0;top:0" width="1336" height="676"><line x1="482" y1="382" x2="519.81" y2="347.49" stroke="#f00" stroke-width="2.2" stroke-linecap="round"/><polygon points="525.5,342.3 520.41,353.04 514.34,346.39" fill="#f00"/></svg>
<svg style="position:absolute;left:0;top:0" width="1336" height="676"><line x1="511" y1="399.4" x2="537.60" y2="378.90" stroke="#f00" stroke-width="2.2" stroke-linecap="round"/><polygon points="543.7,374.2 537.73,384.48 532.24,377.35" fill="#f00"/></svg>
<svg style="position:absolute;left:0;top:0" width="1336" height="676"><line x1="1065.4" y1="534" x2="1103.65" y2="588.14" stroke="#f00" stroke-width="2.5" stroke-linecap="round"/><polygon points="1108.5,595 1097.49,588.08 1105.66,582.31" fill="#f00"/></svg>
<svg style="position:absolute;left:0;top:0" width="1336" height="676"><line x1="1132" y1="495" x2="1180.81" y2="476.35" stroke="#f00" stroke-width="2.2" stroke-linecap="round"/><polygon points="1188,473.6 1179.33,481.73 1176.12,473.32" fill="#f00"/></svg>
</body></html>
